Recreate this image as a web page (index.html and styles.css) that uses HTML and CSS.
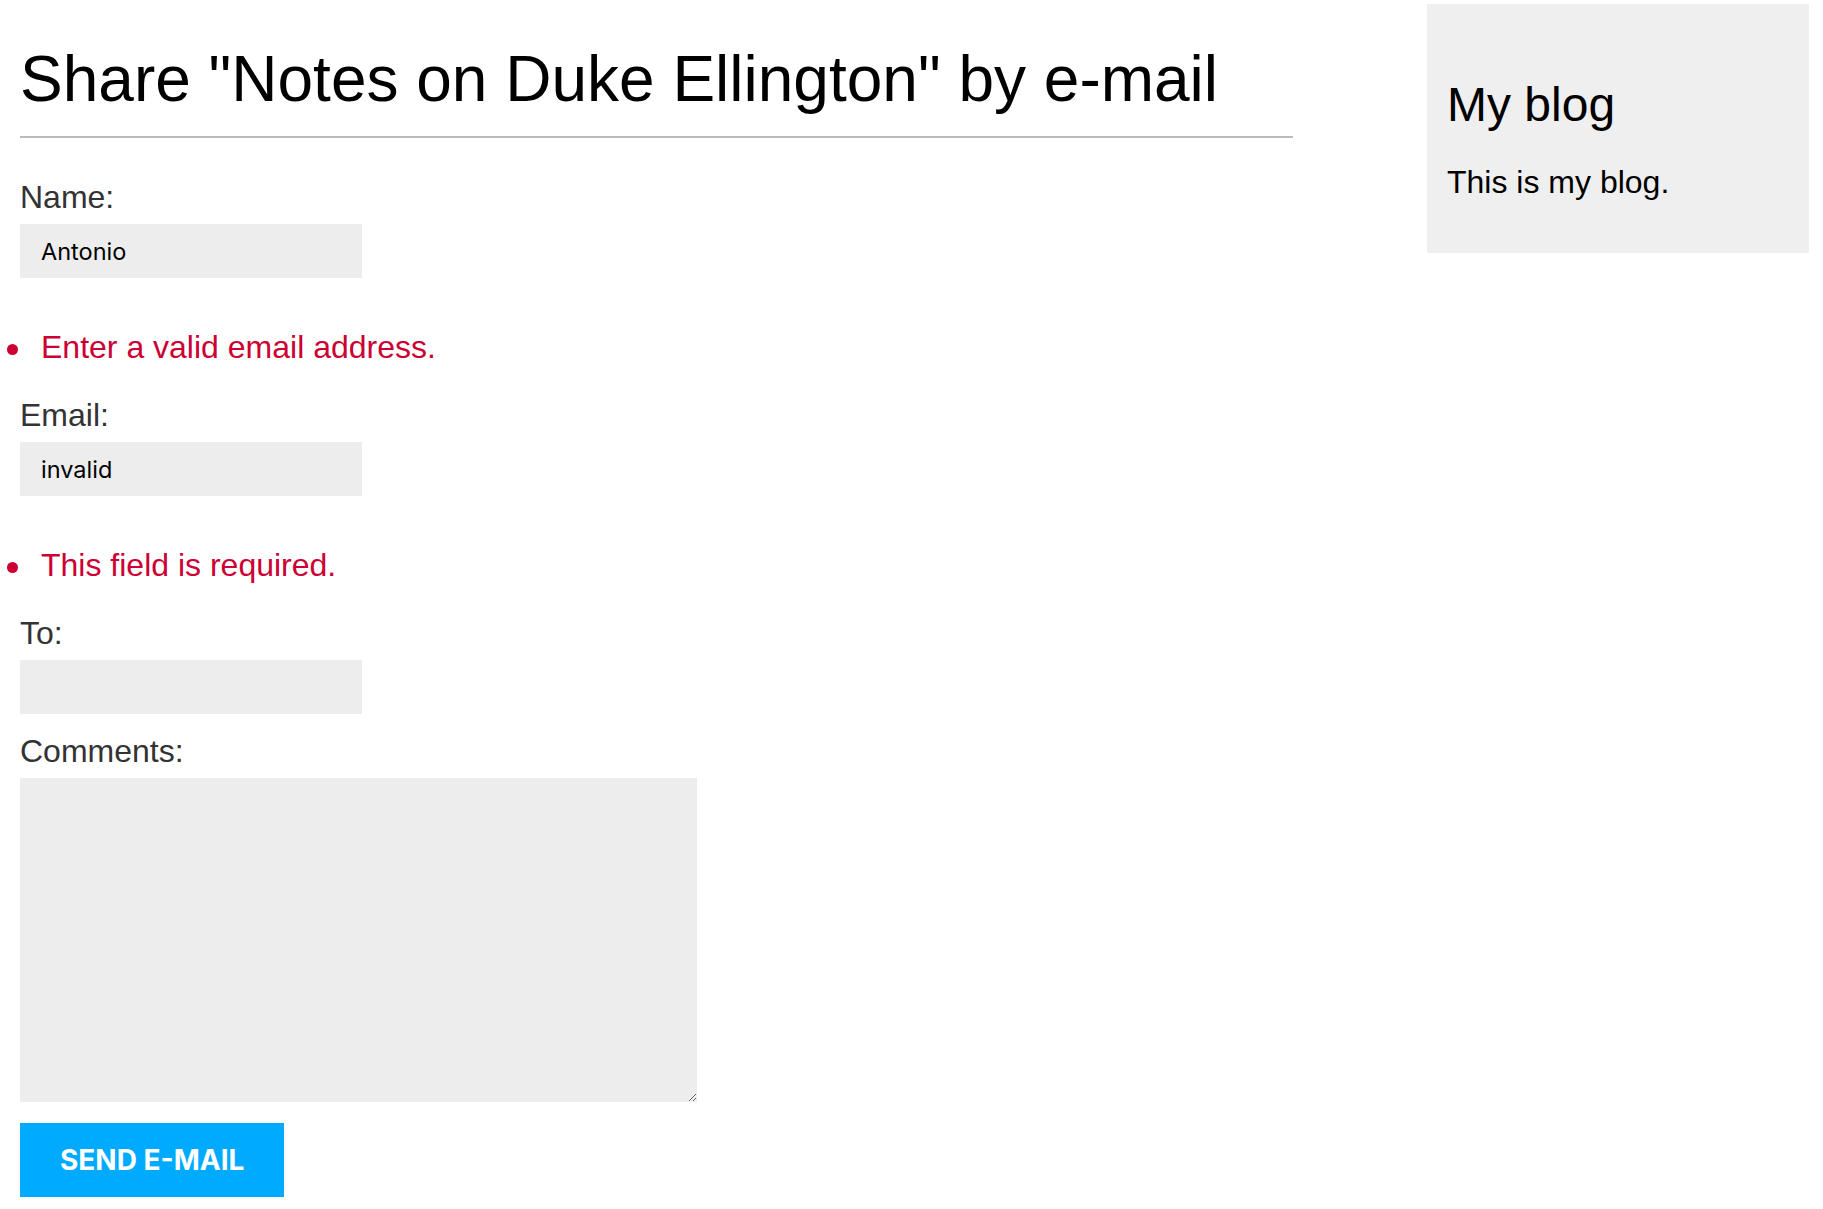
FILE: index.html
```html
<!DOCTYPE html>
<html lang="en">
<head>
<meta charset="utf-8">
<title>Share a post</title>
<link rel="stylesheet" href="styles.css">
</head>
<body>
<div class="page">
  <div class="content">
    <h1 class="title">Share "Notes on Duke Ellington" by e-mail</h1>
    <form class="share-form" action="#" method="post">
      <div class="field">
        <label class="label" for="id_name">Name:</label>
        <input class="input" type="text" id="id_name" value="Antonio">
      </div>
      <ul class="errorlist"><li>Enter a valid email address.</li></ul>
      <div class="field">
        <label class="label" for="id_email">Email:</label>
        <input class="input" type="text" id="id_email" value="invalid">
      </div>
      <ul class="errorlist"><li>This field is required.</li></ul>
      <div class="field">
        <label class="label" for="id_to">To:</label>
        <input class="input" type="text" id="id_to" value="">
      </div>
      <div class="field">
        <label class="label" for="id_comments">Comments:</label>
        <textarea class="textarea" id="id_comments"></textarea>
      </div>
      <button class="submit" type="submit">Send e-mail</button>
    </form>
  </div>
  <aside class="sidebar">
    <h2 class="sidebar-title">My blog</h2>
    <p class="sidebar-text">This is my blog.</p>
  </aside>
</div>
</body>
</html>
```
FILE: styles.css
```css
html, body {
  margin: 0;
  padding: 0;
  background: #fff;
}

body {
  font-family: "Liberation Sans", Helvetica, Arial, sans-serif;
  color: #000;
}

.page {
  display: flex;
  justify-content: space-between;
  align-items: flex-start;
}

.content {
  width: 1273px;
  margin-left: 20px;
}

.title {
  font-size: 64px;
  line-height: 75px;
  font-weight: normal;
  margin: 42px 0 0 0;
  padding: 0 0 19px 0;
  border-bottom: 2px solid #bbb;
}

.share-form {
  margin-top: 43px;
}

.field {
  margin-bottom: 21px;
}

.label {
  display: block;
  font-size: 32px;
  line-height: 32px;
  color: #333;
  margin-bottom: 11px;
}

.input {
  display: block;
  box-sizing: border-box;
  width: 342px;
  height: 54px;
  margin: 0;
  padding: 0 21px;
  border: 0;
  background: #ededed;
  font-family: Inter, "Noto Sans", sans-serif;
  font-size: 23.5px;
  color: #000;
  outline: none;
}

.textarea {
  display: block;
  box-sizing: border-box;
  width: 677px;
  height: 324px;
  margin: 0;
  padding: 10px 21px;
  border: 0;
  background: #ededed;
  font-family: Inter, "Noto Sans", sans-serif;
  font-size: 23px;
  outline: none;
}

.errorlist {
  list-style: none;
  margin: 53px 0 36px -20px;
  padding: 0;
  color: #cc0033;
}

.errorlist li {
  font-size: 32px;
  line-height: 32px;
}

.errorlist li::before {
  content: "";
  display: inline-block;
  width: 11px;
  height: 11px;
  border-radius: 50%;
  background: #cc0033;
  margin: 0 23px 0 7px;
  vertical-align: 3px;
}

.submit {
  display: block;
  height: 74px;
  margin: 0;
  padding: 0 40px;
  border: 0;
  background: #00abff;
  color: #fff;
  font-family: Inter, "Noto Sans", sans-serif;
  font-weight: bold;
  font-size: 28px;
  text-transform: uppercase;
  cursor: pointer;
}

.sidebar {
  width: 382px;
  box-sizing: border-box;
  margin: 4px 14px 0 0;
  padding: 77px 20px 55px 20px;
  background: #efefef;
}

.sidebar-title {
  font-size: 48px;
  line-height: 48px;
  font-weight: normal;
  margin: 0 0 37px 0;
}

.sidebar-text {
  font-size: 32px;
  line-height: 32px;
  margin: 0;
}
```
